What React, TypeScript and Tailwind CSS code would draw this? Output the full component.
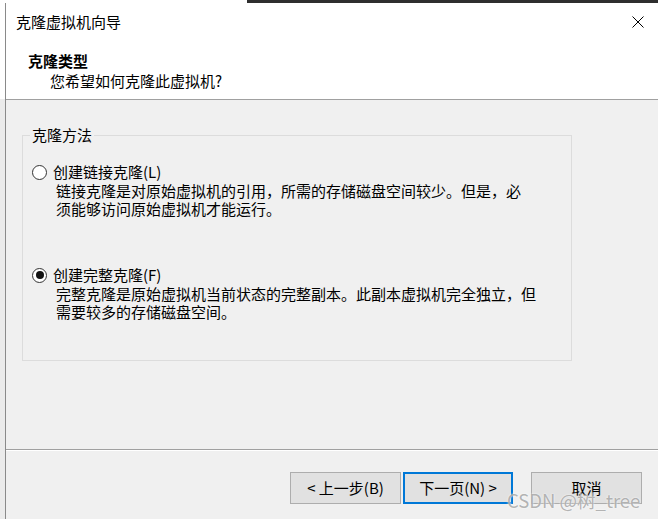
import React from 'react'

const font = { fontFamily: '"Noto Sans CJK SC", "Noto Sans", sans-serif' }

function Radio({ checked, label, lines, className }: { checked?: boolean; label: string; lines: string[]; className?: string }) {
  return (
    <div className={className}>
      <div className="flex items-center h-[20px]">
        <span className="shrink-0 w-[15px] h-[15px] rounded-full border border-[#333] bg-white flex items-center justify-center">
          {checked && <span className="w-[8px] h-[8px] rounded-full bg-[#111]" />}
        </span>
        <span className="ml-[6px] text-[15px] leading-[20px] text-black">{label}</span>
      </div>
      <div className="pl-[24px] text-[15px] leading-[18px] text-black">
        {lines.map((l) => (
          <div key={l}>{l}</div>
        ))}
      </div>
    </div>
  )
}

export default function App() {
  return (
    <div
      className="relative w-[658px] h-[519px] overflow-hidden bg-[linear-gradient(to_bottom,#ffffff_99px,#ebebeb_99px)]"
      style={font}
    >
      {/* window behind */}
      <div className="flex h-[3px]">
        <div className="w-[247px] bg-white" />
        <div className="flex-1 bg-[#2e2e2e]" />
      </div>

      <div className="ml-[5px] h-[516px] border-l border-[#8a8a8a] flex flex-col">
        {/* Title bar */}
        <div className="h-[38px] bg-white flex items-center justify-between pl-[10px] pr-[14px]">
          <span className="text-[15px] text-black">克隆虚拟机向导</span>
          <svg width="12" height="12" viewBox="0 0 12 12">
            <path d="M0.5 0.5 L11.5 11.5 M11.5 0.5 L0.5 11.5" stroke="#000" strokeWidth="1" />
          </svg>
        </div>

        {/* Header */}
        <div className="h-[58px] bg-white pt-[10px] pl-[22px] text-[15px] leading-[20px] text-black">
          <div className="font-bold">克隆类型</div>
          <div className="pl-[22px]">您希望如何克隆此虚拟机?</div>
        </div>
        <div className="h-px bg-[#a0a0a0]" />

        {/* Body */}
        <div className="h-[349px] bg-[#f0f0f0] pt-[25px] pl-[16px]">
          <fieldset className="w-[550px] h-[236px] border border-[#dcdcdc] pl-[9px]">
            <legend className="ml-[-2px] px-[2px] text-[15px] leading-[20px] text-black">克隆方法</legend>
            <Radio
              className="mt-[17px]"
              label="创建链接克隆(L)"
              lines={['链接克隆是对原始虚拟机的引用，所需的存储磁盘空间较少。但是，必', '须能够访问原始虚拟机才能运行。']}
            />
            <Radio
              checked
              className="mt-[47px]"
              label="创建完整克隆(F)"
              lines={['完整克隆是原始虚拟机当前状态的完整副本。此副本虚拟机完全独立，但', '需要较多的存储磁盘空间。']}
            />
          </fieldset>
        </div>

        <div className="h-px bg-[#a0a0a0]" />
        <div className="h-px bg-white" />

        {/* Footer */}
        <div className="flex-1 bg-[#f0f0f0] pt-[21px] pr-[16px] flex justify-end items-start text-[15px] text-black">
          <button className="w-[111px] h-[32px] bg-[#e1e1e1] border border-[#adadad]">&lt; 上一步(B)</button>
          <button className="ml-[2px] w-[110px] h-[32px] bg-[#e1e1e1] border-2 border-[#0078d7]">下一页(N) &gt;</button>
          <button className="ml-[18px] w-[111px] h-[32px] bg-[#e1e1e1] border border-[#adadad]">取消</button>
        </div>
      </div>

      {/* watermark */}
      <div className="absolute left-[507px] top-[487px] text-[18.5px] leading-[26px] text-[#a0a0a0]/80 [text-shadow:0_0_2px_#fff]">
        CSDN @树_tree
      </div>
    </div>
  )
}
